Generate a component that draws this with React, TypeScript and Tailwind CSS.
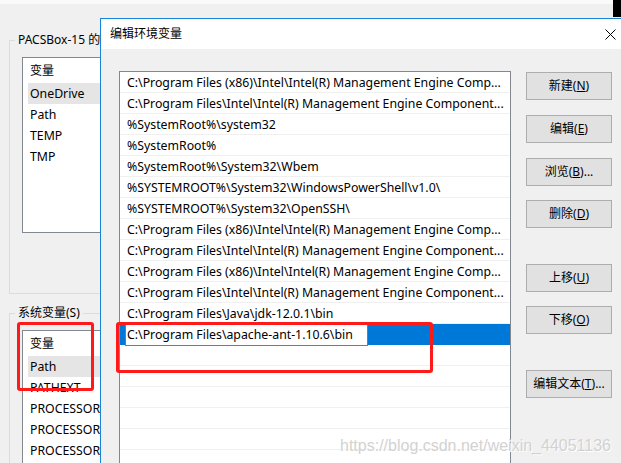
import { ReactNode } from "react"

const paths = [
    "C:\\Program Files (x86)\\Intel\\Intel(R) Management Engine Comp...",
    "C:\\Program Files\\Intel\\Intel(R) Management Engine Component...",
    "%SystemRoot%\\system32",
    "%SystemRoot%",
    "%SystemRoot%\\System32\\Wbem",
    "%SYSTEMROOT%\\System32\\WindowsPowerShell\\v1.0\\",
    "%SYSTEMROOT%\\System32\\OpenSSH\\",
    "C:\\Program Files (x86)\\Intel\\Intel(R) Management Engine Comp...",
    "C:\\Program Files\\Intel\\Intel(R) Management Engine Component...",
    "C:\\Program Files (x86)\\Intel\\Intel(R) Management Engine Comp...",
    "C:\\Program Files\\Intel\\Intel(R) Management Engine Component...",
    "C:\\Program Files\\Java\\jdk-12.0.1\\bin",
]

interface IBtn {
    label: string,
    hot: string,
    tail?: string,
    className?: string
}

const WinButton = ({ label, hot, tail, className }: IBtn) => {
    return (
        <button className={`h-[28px] w-[86px] shrink-0 border border-[#adadad] bg-[#e1e1e1] text-[12px] text-black ${className ?? ""}`}>
            {label}(<span className="underline">{hot}</span>){tail}
        </button>
    )
}

const GroupBox = ({ title, rows, active, className }: { title: string, rows: string[], active: number, className?: string }) => {
    return (
        <fieldset className={`w-[300px] border border-[#dcdcdc] pl-[5px] ${className ?? ""}`}>
            <legend className="px-[3px] text-[12px] leading-[16px] whitespace-nowrap">{title}</legend>
            <div className="ml-[7px] mt-[9px] h-[176px] w-[200px] border border-[#828790] bg-white">
                <div className="h-[25px] pl-[7px] pt-[3px] text-[12px] leading-[20px]">变量</div>
                {rows.map((row, index) => (
                    <div key={index} className={`ml-[5px] h-[21px] pl-[2px] text-[12.3px] leading-[21px] whitespace-nowrap ${index === active ? "bg-[#e5e5e5]" : ""}`}>{row}</div>
                ))}
            </div>
        </fieldset>
    )
}

const RedMark = ({ className }: { className: string }) => <div className={`absolute rounded-[3px] border-[3px] border-[#ff1a1a] ${className}`} />

export default function App(): ReactNode {
    return (
        <div className="relative h-[463px] w-[621px] overflow-hidden bg-[#f0f0f0] font-['Noto_Sans','Noto_Sans_CJK_SC',sans-serif] text-black">
            <div className="h-[4px] bg-[#fafafa]" />
            <div className="absolute left-[613px] top-0 h-[17px] w-[8px] bg-black" />

            {/* back window: environment variables, only the part left of the dialog shows */}
            <div className="absolute left-[9px] top-[32px] flex h-[431px] w-[91px] flex-col gap-[11px] overflow-hidden">
                <GroupBox className="h-[262px] shrink-0" title="PACSBox-15 的用户变量(U)" rows={["OneDrive", "Path", "TEMP", "TMP"]} active={0} />
                <GroupBox className="h-[200px] shrink-0" title="系统变量(S)" rows={["Path", "PATHEXT", "PROCESSOR_ARCHITECTURE", "PROCESSOR_IDENTIFIER", "PROCESSOR_LEVEL"]} active={0} />
            </div>

            {/* front window: edit dialog */}
            <div className="absolute bottom-0 left-[100px] right-0 top-[18px] flex flex-col overflow-hidden border-l border-t border-[#1883d7] bg-[#f0f0f0]">
                <div className="flex h-[30px] shrink-0 items-center justify-between bg-white pl-[9px] pr-[5px]">
                    <span className="text-[12px]">编辑环境变量</span>
                    <svg width="11" height="11" viewBox="0 0 11 11">
                        <path d="M0.5 0.5 L10.5 10.5 M10.5 0.5 L0.5 10.5" stroke="#000" strokeWidth="1" fill="none" />
                    </svg>
                </div>
                <div className="flex shrink-0 gap-[15px] pl-[18px] pt-[22px]">
                    <div className="h-[420px] w-[392px] shrink-0 border border-[#828790] bg-white">
                        {paths.map((p, index) => (
                            <div key={index} className="h-[21px] border-b border-[#f0f0f0] pl-[7px] text-[12.3px] leading-[21px] whitespace-nowrap">{p}</div>
                        ))}
                        <div className="flex h-[21px] items-start bg-[#0078d7] pl-[5px]">
                            <div className="h-[22px] w-[243px] shrink-0 border border-[#7a7a7a] bg-white pl-[1px] text-[12.3px] leading-[20px] whitespace-nowrap">C:\Program Files\apache-ant-1.10.6\bin</div>
                        </div>
                        {[0, 1, 2, 3, 4].map(i => (
                            <div key={i} className="h-[21px] border-b border-[#f0f0f0]" />
                        ))}
                    </div>
                    <div className="flex flex-col pt-[1px]">
                        <WinButton label="新建" hot="N" />
                        <WinButton className="mt-[15px]" label="编辑" hot="E" />
                        <WinButton className="mt-[15px]" label="浏览" hot="B" tail="..." />
                        <WinButton className="mt-[14px]" label="删除" hot="D" />
                        <WinButton className="mt-[36px]" label="上移" hot="U" />
                        <WinButton className="mt-[14px]" label="下移" hot="O" />
                        <WinButton className="mt-[36px]" label="编辑文本" hot="T" tail="..." />
                    </div>
                </div>
            </div>

            <RedMark className="left-[17px] top-[322px] h-[69px] w-[77px]" />
            <RedMark className="left-[116px] top-[322px] h-[51px] w-[317px]" />

            <div className="absolute left-[340px] top-[434px] font-['Liberation_Sans',sans-serif] text-[16px] text-[#d2d2d2] [text-shadow:1px_1px_0_#ffffff]">https://blog.csdn.net/weixin_44051136</div>
        </div>
    )
}
